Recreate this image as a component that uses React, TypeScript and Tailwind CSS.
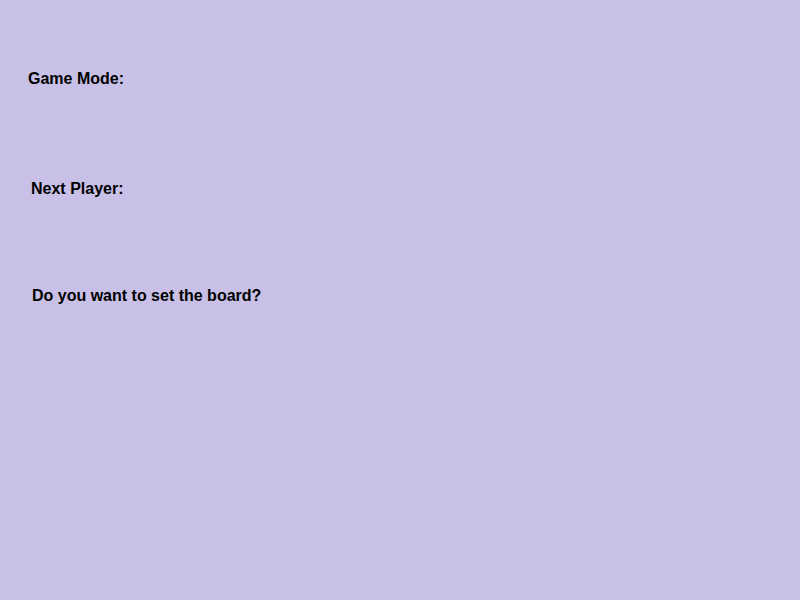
const App = () => {
  return (
    <main className="min-h-[600px] w-full bg-[#c8c0e6] font-['Liberation_Sans',Arial,sans-serif] text-black">
      <section className="flex flex-col pt-[67px]">
        <div className="pl-[28px]">
          <h3 className="text-base font-bold">Game Mode:</h3>
        </div>
        <div className="mt-[86px] pl-[31px]">
          <h3 className="text-base font-bold">Next Player:</h3>
        </div>
        <div className="mt-[83px] pl-[32px]">
          <h3 className="text-base font-bold">Do you want to set the board?</h3>
        </div>
      </section>
    </main>
  );
};

export default App;
